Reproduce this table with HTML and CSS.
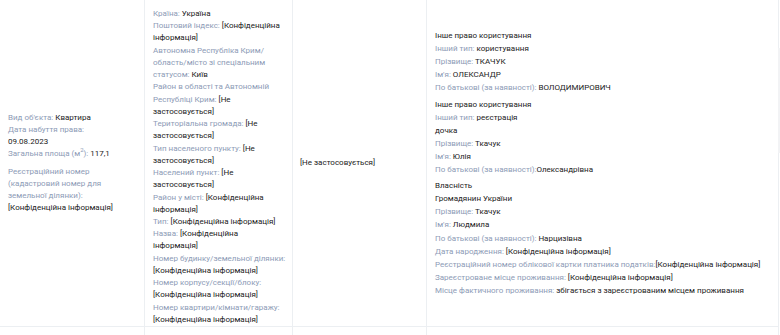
FILE: index.html
```html
<!DOCTYPE html>
<html lang="uk">
<head>
<meta charset="utf-8">
<title>Об'єкт</title>
<link rel="stylesheet" href="styles.css">
</head>
<body>
<div class="wrap">
<table class="grid">
  <tr class="row">
    <td class="cell c1">
      <div class="item"><span class="lbl">Вид об'єкта:</span> <span class="val">Квартира</span></div>
      <div class="item"><span class="lbl">Дата набуття права:</span><br><span class="val">09.08.2023</span></div>
      <div class="item"><span class="lbl">Загальна площа (м<sup>2</sup>):</span> <span class="val">117,1</span></div>
      <div class="item reg"><span class="lbl">Реєстраційний номер (кадастровий номер для земельної ділянки):</span> <span class="val">[Конфіденційна інформація]</span></div>
    </td>
    <td class="cell c2">
      <div><span class="lbl">Країна:</span> <span class="val">Україна</span></div>
      <div><span class="lbl">Поштовий індекс:</span> <span class="val">[Конфіденційна інформація]</span></div>
      <div><span class="lbl">Автономна Республіка Крим/ область/місто зі спеціальним статусом:</span> <span class="val">Київ</span></div>
      <div><span class="lbl">Район в області та Автономній Республіці Крим:</span> <span class="val">[Не застосовується]</span></div>
      <div><span class="lbl">Територіальна громада:</span> <span class="val">[Не застосовується]</span></div>
      <div><span class="lbl">Тип населеного пункту:</span> <span class="val">[Не застосовується]</span></div>
      <div><span class="lbl">Населений пункт:</span> <span class="val">[Не застосовується]</span></div>
      <div><span class="lbl">Район у місті:</span> <span class="val">[Конфіденційна інформація]</span></div>
      <div><span class="lbl">Тип:</span> <span class="val">[Конфіденційна інформація]</span></div>
      <div><span class="lbl">Назва:</span> <span class="val">[Конфіденційна інформація]</span></div>
      <div><span class="lbl nw">Номер будинку/земельної ділянки:</span> <span class="val">[Конфіденційна інформація]</span></div>
      <div><span class="lbl">Номер корпусу/секції/блоку:</span> <span class="val">[Конфіденційна інформація]</span></div>
      <div><span class="lbl">Номер квартири/кімнати/гаражу:</span> <span class="val">[Конфіденційна інформація]</span></div>
    </td>
    <td class="cell c3"><span class="val">[Не застосовується]</span></td>
    <td class="cell c4">
      <div class="group">
        <div class="val">Інше право користування</div>
        <div><span class="lbl">Інший тип:</span> <span class="val">користування</span></div>
        <div><span class="lbl">Прізвище:</span> <span class="val">ТКАЧУК</span></div>
        <div><span class="lbl">Ім'я:</span> <span class="val">ОЛЕКСАНДР</span></div>
        <div><span class="lbl">По батькові (за наявності):</span> <span class="val">ВОЛОДИМИРОВИЧ</span></div>
      </div>
      <div class="group">
        <div class="val">Інше право користування</div>
        <div><span class="lbl">Інший тип:</span> <span class="val">реєстрація<br>дочка</span></div>
        <div><span class="lbl">Прізвище:</span> <span class="val">Ткачук</span></div>
        <div><span class="lbl">Ім'я:</span> <span class="val">Юлія</span></div>
        <div><span class="lbl">По батькові (за наявності):</span><span class="val">Олександрівна</span></div>
      </div>
      <div class="group">
        <div class="val">Власність</div>
        <div class="val">Громадянин України</div>
        <div><span class="lbl">Прізвище:</span> <span class="val">Ткачук</span></div>
        <div><span class="lbl">Ім'я:</span> <span class="val">Людмила</span></div>
        <div><span class="lbl">По батькові (за наявності):</span> <span class="val">Нарцизівна</span></div>
        <div><span class="lbl">Дата народження:</span> <span class="val">[Конфіденційна інформація]</span></div>
        <div><span class="lbl">Реєстраційний номер облікової картки платника податків:</span><span class="val">[Конфіденційна інформація]</span></div>
        <div><span class="lbl">Зареєстроване місце проживання:</span> <span class="val">[Конфіденційна інформація]</span></div>
        <div><span class="lbl">Місце фактичного проживання:</span> <span class="val">збігається з зареєстрованим місцем проживання</span></div>
      </div>
    </td>
  </tr>
  <tr class="row next">
    <td class="cell"></td>
    <td class="cell"></td>
    <td class="cell"></td>
    <td class="cell"></td>
  </tr>
</table>
<div class="scroll-shade"></div>
</div>
</body>
</html>
```
FILE: styles.css
```css
html, body {
  margin: 0;
  padding: 0;
  background: #ffffff;
}
body {
  font-family: Roboto, "Liberation Sans", Arial, sans-serif;
  font-size: 8px;
  line-height: 12.24px;
  color: #222222;
}
.wrap {
  position: relative;
}
.grid {
  border-collapse: collapse;
  table-layout: fixed;
  width: 779px;
}
.cell {
  border: 1px solid #eceff2;
  border-top: none;
  vertical-align: middle;
  padding: 4px 8px 4px 8px;
}
.c1 { width: 128px; border-left: none; }
.c2 { width: 131px; padding: 8px 8px 0 8px; }
.c3 { width: 118px; padding-left: 7px; }
.c4 { padding-left: 8px; line-height: 13.1px; }
.lbl { color: #8d9bb6; }
.val { color: #222222; }
.nw { white-space: nowrap; }
sup { font-size: 6px; line-height: 0; }
.reg { margin-top: 5px; }
.group + .group { margin-top: 3px; }
.next .cell { height: 20px; padding: 0; }
.next .cell:first-child { border-left: none; }
.scroll-shade {
  position: absolute;
  top: 48px;
  left: 778px;
  width: 2px;
  height: 105px;
  background: #f2f3f5;
}
```
